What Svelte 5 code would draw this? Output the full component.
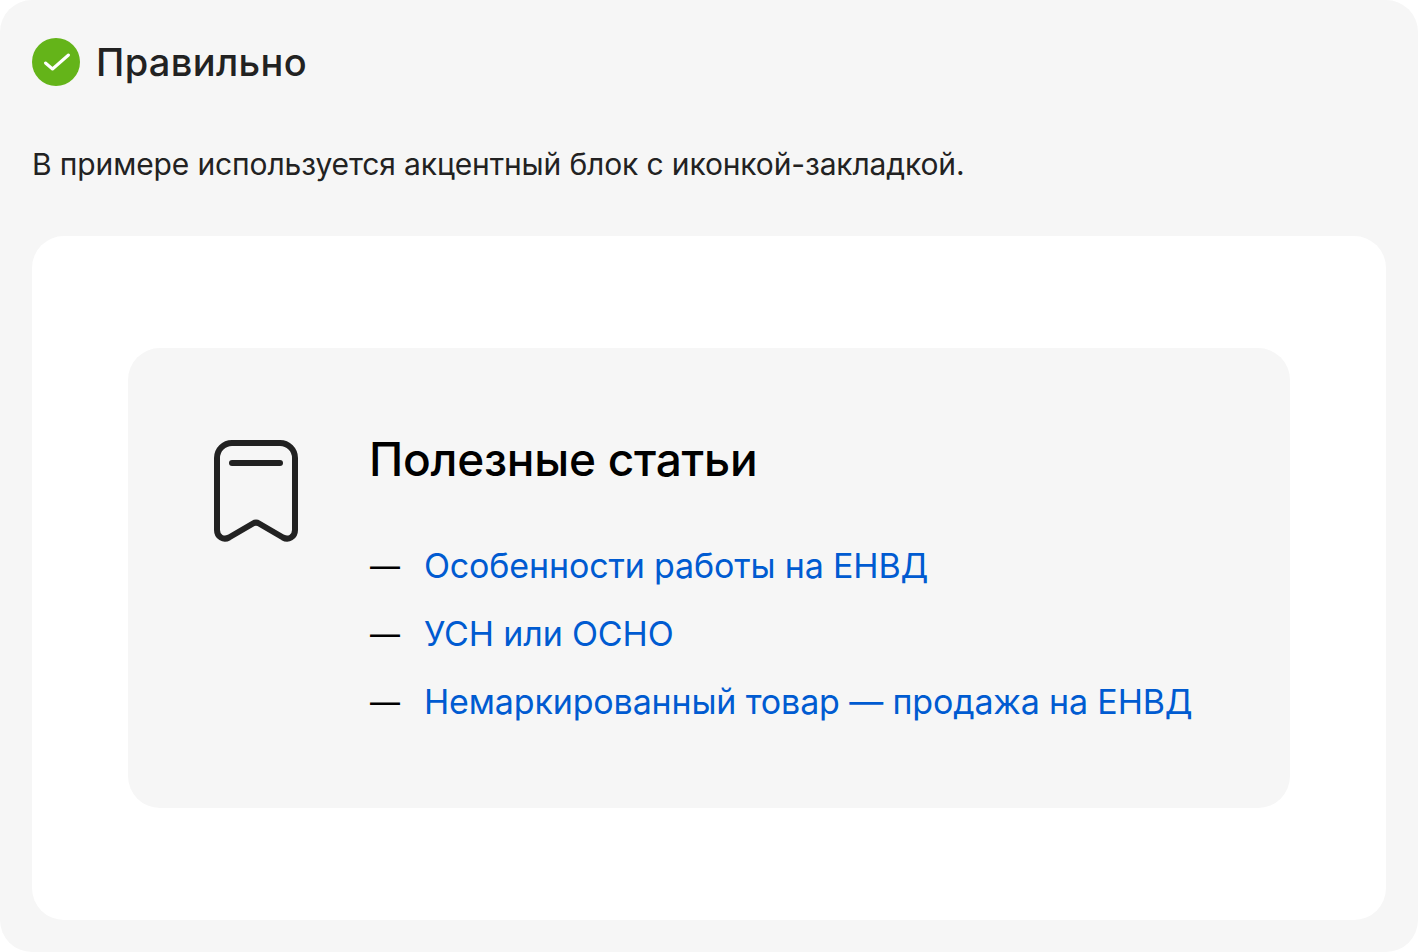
<script lang="ts">
  const links = [
    'Особенности работы на ЕНВД',
    'УСН или ОСНО',
    'Немаркированный товар — продажа на ЕНВД',
  ];
</script>

<div class="example">
  <div class="verdict">
    <span class="verdict-icon">
      <svg width="48" height="48" viewBox="0 0 48 48" fill="none">
        <circle cx="24" cy="24" r="24" fill="#64b419" />
        <path
          d="M13.500 25L20.500 31L36.500 17"
          stroke="white"
          stroke-width="3"
          stroke-linecap="round"
          stroke-linejoin="round"
        />
      </svg>
    </span>
    <span class="verdict-title">Правильно</span>
  </div>

  <p class="caption">В примере используется акцентный блок с иконкой-закладкой.</p>

  <div class="canvas">
    <div class="callout">
      <svg class="bookmark" width="84" height="102" viewBox="0 0 84 102" fill="none">
        <path
          d="M3 18C3 9.700 9.700 3 18 3H66C74.300 3 81 9.700 81 18V90C81 97 74.500 100.500 69 97.500L45 83.500C43 82.300 41 82.300 39 83.500L15 97.500C9.500 100.500 3 97 3 90V18Z"
          stroke="#222222"
          stroke-width="6"
          stroke-linejoin="round"
        />
        <path d="M18 23H66" stroke="#222222" stroke-width="6" stroke-linecap="round" />
      </svg>
      <div class="callout-body">
        <h3>Полезные статьи</h3>
        <ul>
          {#each links as link}
            <li>
              <span class="dash">—</span>
              <a href="#top">{link}</a>
            </li>
          {/each}
        </ul>
      </div>
    </div>
  </div>
</div>

<style>
  :global(body) {
    background: #ffffff;
  }

  .example {
    box-sizing: border-box;
    width: 1418px;
    height: 952px;
    padding: 32px;
    border-radius: 32px;
    background: #f6f6f6;
    font-family: Inter, "Liberation Sans", sans-serif;
    color: #222222;
  }

  .verdict {
    display: flex;
    align-items: center;
    gap: 16px;
    height: 62px;
    margin-top: -1px;
  }

  .verdict-icon {
    display: flex;
    margin-top: -1px;
  }

  .verdict-title {
    font-size: 38px;
    line-height: 62px;
    font-weight: 500;
    letter-spacing: 0.35px;
  }

  .caption {
    margin: 49px 0 0;
    font-size: 30px;
    line-height: 44px;
    letter-spacing: -0.13px;
  }

  .canvas {
    box-sizing: border-box;
    height: 684px;
    margin-top: 50px;
    padding: 112px 96px;
    border-radius: 32px;
    background: #ffffff;
  }

  .callout {
    display: flex;
    box-sizing: border-box;
    height: 460px;
    padding: 92px 86px;
    border-radius: 32px;
    background: #f6f6f6;
  }

  .bookmark {
    flex: none;
  }

  .callout-body {
    margin-left: 71px;
    margin-top: -13px;
  }

  h3 {
    margin: 0;
    font-size: 46px;
    line-height: 64px;
    font-weight: 500;
    letter-spacing: -0.25px;
    color: #000000;
  }

  ul {
    list-style: none;
    margin: 51px 0 0;
    padding: 0;
    display: flex;
    flex-direction: column;
    gap: 20px;
  }

  li {
    display: flex;
    font-size: 34px;
    line-height: 48px;
    letter-spacing: -0.15px;
  }

  .dash {
    box-sizing: border-box;
    width: 55px;
    padding-left: 1px;
    font-size: 30px;
    color: #000000;
  }

  a {
    color: #005bd1;
    text-decoration: none;
  }
</style>
